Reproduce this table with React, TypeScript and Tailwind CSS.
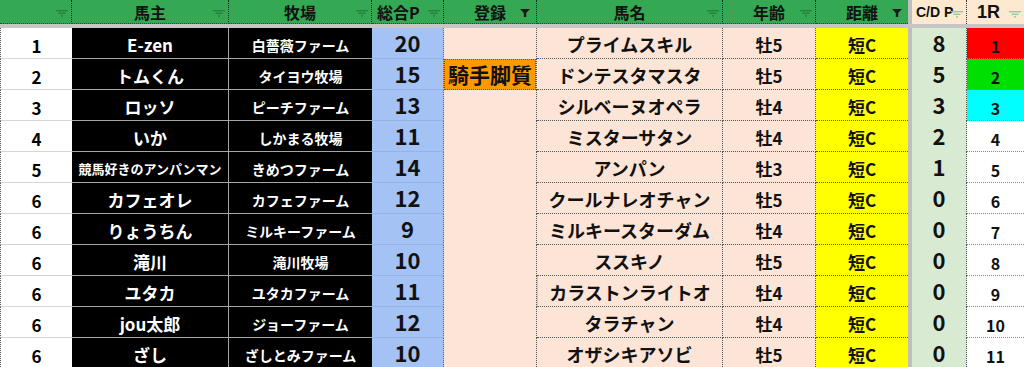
import React from 'react'

const cols =
  'grid grid-cols-[72px_157px_143px_72px_93px_186px_93px_92px_4px_55px_57px]'

const rows = [
  { rank: 1, owner: 'E-zen', farm: '白薔薇ファーム', pt: 20, reg: '', horse: 'プライムスキル', age: '牡5', dist: '短C', cd: 8, r: 1 },
  { rank: 2, owner: 'トムくん', farm: 'タイヨウ牧場', pt: 15, reg: '騎手脚質', horse: 'ドンテスタマスタ', age: '牡5', dist: '短C', cd: 5, r: 2 },
  { rank: 3, owner: 'ロッソ', farm: 'ピーチファーム', pt: 13, reg: '', horse: 'シルベーヌオペラ', age: '牡4', dist: '短C', cd: 3, r: 3 },
  { rank: 4, owner: 'いか', farm: 'しかまる牧場', pt: 11, reg: '', horse: 'ミスターサタン', age: '牡4', dist: '短C', cd: 2, r: 4 },
  { rank: 5, owner: '競馬好きのアンパンマン', farm: 'きめつファーム', pt: 14, reg: '', horse: 'アンパン', age: '牡3', dist: '短C', cd: 1, r: 5 },
  { rank: 6, owner: 'カフェオレ', farm: 'カフェファーム', pt: 12, reg: '', horse: 'クールナレオチャン', age: '牡5', dist: '短C', cd: 0, r: 6 },
  { rank: 6, owner: 'りょうちん', farm: 'ミルキーファーム', pt: 9, reg: '', horse: 'ミルキースターダム', age: '牡4', dist: '短C', cd: 0, r: 7 },
  { rank: 6, owner: '滝川', farm: '滝川牧場', pt: 10, reg: '', horse: 'ススキノ', age: '牡5', dist: '短C', cd: 0, r: 8 },
  { rank: 6, owner: 'ユタカ', farm: 'ユタカファーム', pt: 11, reg: '', horse: 'カラストンライトオ', age: '牡4', dist: '短C', cd: 0, r: 9 },
  { rank: 6, owner: 'jou太郎', farm: 'ジョーファーム', pt: 12, reg: '', horse: 'タラチャン', age: '牡4', dist: '短C', cd: 0, r: 10 },
  { rank: 6, owner: 'ざし', farm: 'ざしとみファーム', pt: 10, reg: '', horse: 'オザシキアソビ', age: '牡5', dist: '短C', cd: 0, r: 11 },
]

const rColor: Record<number, string> = {
  1: 'bg-[#ff0000]',
  2: 'bg-[#00e000]',
  3: 'bg-[#00ffff]',
}

function Filter({ active, light }: { active?: boolean; light?: boolean }) {
  if (active)
    return (
      <svg width="10" height="8" viewBox="0 0 10 8" className="absolute right-[6px] bottom-[6px]">
        <path d="M0 0h10L6.2 4v4H3.8V4z" fill="#1b1b1b" />
      </svg>
    )
  return (
    <svg width="12" height="7" viewBox="0 0 12 7" className="absolute right-[3px] bottom-[6px]">
      <g fill={light ? '#9cc3a4' : '#23803f'}>
        <rect x="0" y="0" width="12" height="1.4" />
        <rect x="2.5" y="2.6" width="7" height="1.4" />
        <rect x="5" y="5.2" width="2" height="1.4" />
      </g>
    </svg>
  )
}

function Head({ label, active, cream, last }: { label?: string; active?: boolean; cream?: boolean; last?: boolean }) {
  return (
    <div
      className={`relative flex items-center justify-center h-6 font-bold text-[16px] text-[#111] ${
        cream ? 'bg-[#fde9d0]' : 'bg-[#34a853] border-b border-b-[#1d4d2a] [border-bottom-style:dotted]'
      } ${last ? '' : 'border-r border-r-[#222] [border-right-style:dotted]'}`}
    >
      {label}
      <Filter active={active} light={cream} />
    </div>
  )
}

export default function App() {
  return (
    <div className="w-[1024px] h-[367px] overflow-hidden bg-white font-['Noto_Sans_CJK_JP','Noto_Sans',sans-serif]">
      <div className={cols}>
        <Head />
        <Head label="馬主" />
        <Head label="牧場" />
        <div className="relative flex items-center h-6 pl-[5px] font-bold text-[16px] text-[#111] bg-[#34a853] border-r border-r-[#222] [border-right-style:dotted] border-b border-b-[#1d4d2a] [border-bottom-style:dotted]">
          総合P
          <Filter />
        </div>
        <Head label="登録" active />
        <Head label="馬名" />
        <Head label="年齢" />
        <Head label="距離" active last />
        <div className="bg-[#bfbfbf]" />
        <div className="relative flex items-center h-6 pl-[4px] bg-[#fde9d0] border-r border-r-[#333] [border-right-style:dotted] font-['Liberation_Sans',sans-serif] font-bold text-[14px] text-[#111]">
          C/D P
          <Filter light />
        </div>
        <div className="relative flex items-center h-6 pl-[10px] bg-[#fde9d0] font-['Liberation_Sans',sans-serif] font-bold text-[18px] text-[#111]">
          1R
          <Filter light />
        </div>
      </div>
      <div className="h-1 bg-[#c6c6c6]" />

      {rows.map((row, i) => (
        <div key={i} className={cols}>
          <div className="flex items-center justify-center h-[31px] pt-[5px] bg-white border-b border-b-[#d6d6d6] border-l border-l-[#555] [border-left-style:dotted] font-bold text-[17px] text-black">
            {row.rank}
          </div>
          <div
            className={`flex items-center justify-center h-[31px] pt-[4px] bg-black border-b border-b-[#a6a6a6] border-r border-r-[#a6a6a6] font-bold text-white whitespace-nowrap ${
              row.owner.length > 8 ? 'text-[13px]' : 'text-[17px]'
            }`}
          >
            {row.owner}
          </div>
          <div className="flex items-center justify-center h-[31px] pt-[4px] bg-black border-b border-b-[#a6a6a6] font-bold text-[14px] text-white whitespace-nowrap">
            {row.farm}
          </div>
          <div className="flex items-center justify-center h-[31px] pb-[2px] bg-[#a4c2f4] border-b border-b-[#93b3ea] border-r border-r-[#666] [border-right-style:dotted] font-bold text-[22px] text-[#111]">
            {row.pt}
          </div>
          <div className="flex h-[31px] bg-[#fce4d6] border-r border-r-[#555] [border-right-style:dotted]">
            {row.reg && (
              <div className="flex items-center justify-center w-full h-[31px] bg-[#ff9900] border border-[#555] border-dotted font-bold text-[21px] text-[#111] whitespace-nowrap">
                {row.reg}
              </div>
            )}
          </div>
          <div
            className={`flex items-center justify-center h-[31px] pt-[2px] bg-[#fce4d6] border-b border-b-[#555] [border-bottom-style:dotted] border-r border-r-[#555] [border-right-style:dotted] font-bold text-[18px] text-[#111] whitespace-nowrap ${
              i === 8 ? 'border-l border-l-[#c8c8c8]' : ''
            }`}
          >
            {row.horse}
          </div>
          <div className="flex items-center justify-center h-[31px] pt-[4px] bg-[#fce4d6] border-b border-b-[#555] [border-bottom-style:dotted] border-r border-r-[#555] [border-right-style:dotted] font-bold text-[17px] text-[#111]">
            {row.age}
          </div>
          <div className="flex items-center justify-center h-[31px] pt-[4px] bg-[#ffff00] border-b border-b-[#555] [border-bottom-style:dotted] font-bold text-[17px] text-[#111]">
            {row.dist}
          </div>
          <div className="bg-[#bfbfbf]" />
          <div className="flex items-center justify-center h-[31px] pb-[2px] bg-[#d9ead3] border-r border-r-[#555] [border-right-style:dotted] font-bold text-[22px] text-[#111]">
            {row.cd}
          </div>
          <div
            className={`flex items-center justify-center h-[31px] pt-[5px] border-b border-b-[#888] [border-bottom-style:dotted] font-bold text-[16px] text-[#111] ${
              rColor[row.r] ?? 'bg-white'
            }`}
          >
            {row.r}
          </div>
        </div>
      ))}
    </div>
  )
}
